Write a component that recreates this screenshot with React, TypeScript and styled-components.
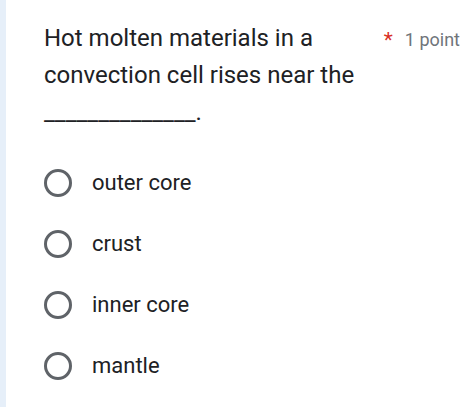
import React from 'react';
import styled, { createGlobalStyle } from 'styled-components';

const GlobalStyle = createGlobalStyle`
  html, body {
    margin: 0;
    padding: 0;
    background: #ffffff;
  }
  body {
    font-family: Roboto, "Noto Sans", Arial, sans-serif;
  }
`;

const Card = styled.div`
  width: 474px;
  height: 407px;
  box-sizing: border-box;
  background: #ffffff;
  border-left: 6px solid #e6eff9;
  display: flex;
  flex-direction: column;
  padding: 20px 14px 0 38px;
  overflow: hidden;
`;

const Header = styled.div`
  display: flex;
  align-items: flex-start;
  justify-content: space-between;
`;

const Question = styled.div`
  font-size: 24px;
  line-height: 37px;
  color: #202124;
  width: 330px;
`;

const Points = styled.div`
  display: flex;
  align-items: flex-start;
  gap: 12px;
  padding-top: 10px;
  white-space: nowrap;
`;

const Required = styled.span`
  color: #d93025;
  font-size: 21px;
  line-height: 20px;
`;

const PointText = styled.span`
  color: #70757a;
  font-size: 18px;
  line-height: 20px;
`;

const Options = styled.div`
  display: flex;
  flex-direction: column;
  gap: 33px;
  margin-top: 38px;
`;

const Option = styled.label`
  display: flex;
  align-items: center;
  gap: 20px;
  height: 28px;
`;

const Radio = styled.span`
  width: 22px;
  height: 22px;
  border: 3px solid #5f6368;
  border-radius: 50%;
  flex-shrink: 0;
`;

const OptionText = styled.span`
  font-size: 22px;
  color: #202124;
  line-height: 28px;
`;

const options = ['outer core', 'crust', 'inner core', 'mantle'];

export default function App() {
  return (
    <>
      <GlobalStyle />
      <Card>
        <Header>
          <Question>
            Hot molten materials in a convection cell rises near the
            <br />
            ______________.
          </Question>
          <Points>
            <Required>*</Required>
            <PointText>1 point</PointText>
          </Points>
        </Header>
        <Options>
          {options.map((o) => (
            <Option key={o}>
              <Radio />
              <OptionText>{o}</OptionText>
            </Option>
          ))}
        </Options>
      </Card>
    </>
  );
}
